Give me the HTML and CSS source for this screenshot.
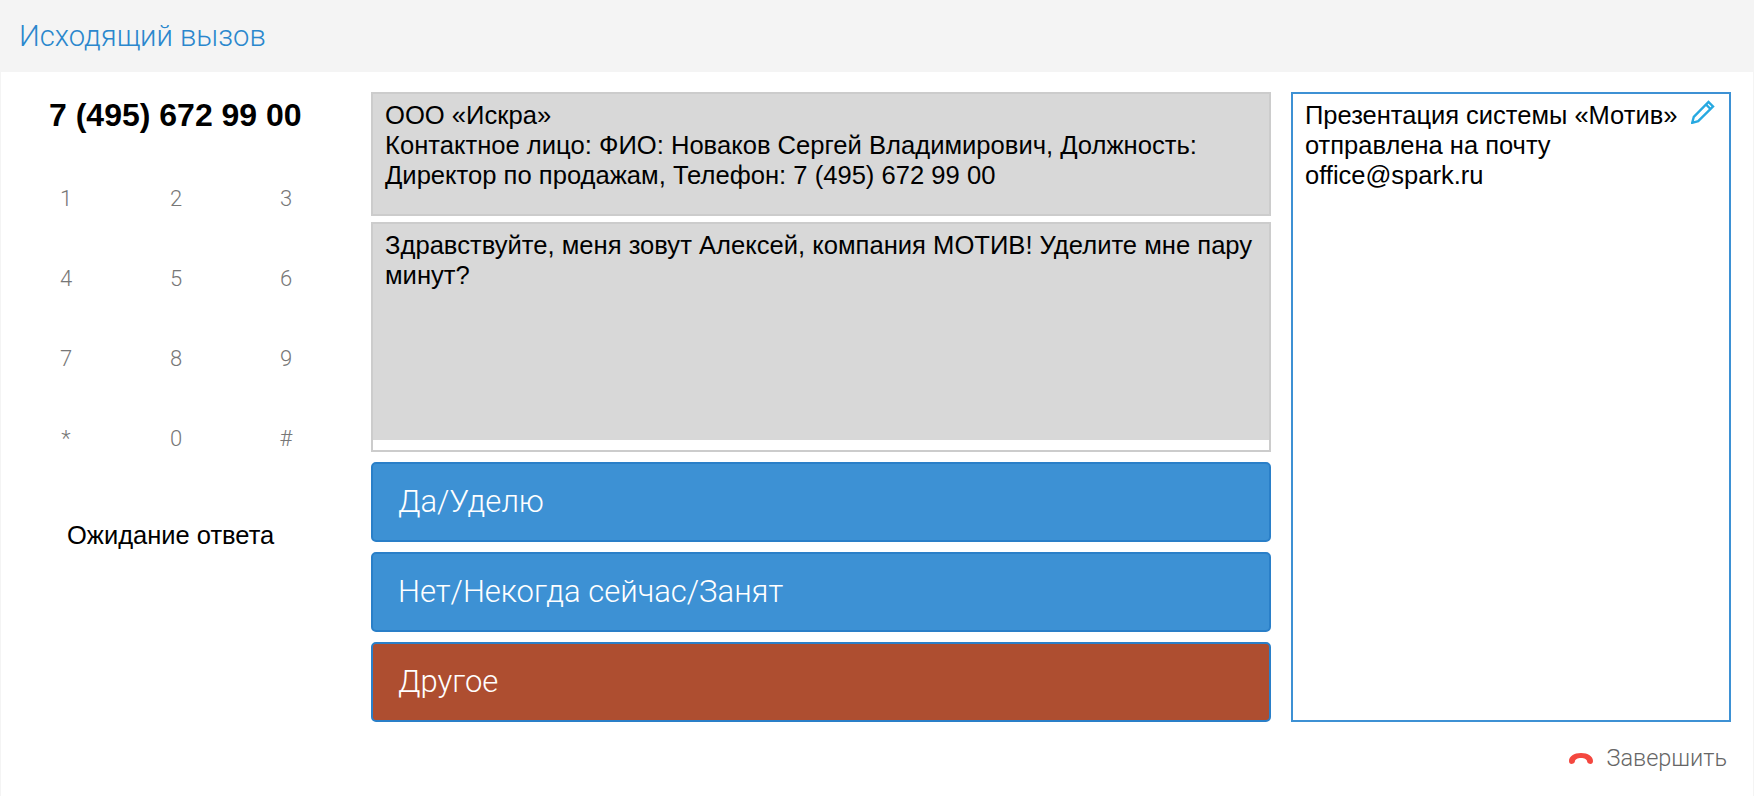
FILE: index.html
```html
<!DOCTYPE html>
<html lang="ru">
<head>
<meta charset="utf-8">
<title>Исходящий вызов</title>
<link rel="stylesheet" href="styles.css">
</head>
<body>
<div class="page">
  <header class="header"><h1 class="title">Исходящий вызов</h1></header>
  <main class="main">
    <section class="dial">
      <div class="number">7 (495) 672 99 00</div>
      <div class="keys">
        <span>1</span><span>2</span><span>3</span>
        <span>4</span><span>5</span><span>6</span>
        <span>7</span><span>8</span><span>9</span>
        <span>*</span><span>0</span><span>#</span>
      </div>
      <div class="status">Ожидание ответа</div>
    </section>
    <section class="center">
      <div class="info">ООО «Искра»<br>Контактное лицо: ФИО: Новаков Сергей Владимирович, Должность: Директор по продажам, Телефон: 7 (495) 672 99 00</div>
      <div class="script"><div class="script-text">Здравствуйте, меня зовут Алексей, компания МОТИВ! Уделите мне пару минут?</div></div>
      <button class="answer">Да/Уделю</button>
      <button class="answer">Нет/Некогда сейчас/Занят</button>
      <button class="answer other">Другое</button>
    </section>
    <aside class="notes">
      <div class="notes-text">Презентация системы «Мотив» отправлена на почту office@spark.ru</div>
      <svg class="pencil" viewBox="0 0 24 24" width="24" height="24" fill="none" stroke="#27a9e1" stroke-width="2.400"><path d="M1.200 22.800 2.800 16.800 17.500 2 22 6.500 7.200 21.200Z"/><path d="M15 4.500 19.500 9"/><path d="M1.200 22.800 3.500 22.200 1.800 20.500Z" fill="#27a9e1" stroke-width="1"/></svg>
    </aside>
  </main>
  <footer class="footer">
    <svg class="hangup" viewBox="0 0 24 11" width="24" height="11"><path d="M0 8C0 3.500 5 0 12 0s12 3.500 12 8c0 1.800-1 3-2.500 3S18 9.800 18 8c0-1.500-2.500-3-6-3S6 6.500 6 8c0 1.800-2 3-3.500 3S0 9.800 0 8Z" fill="#f4473f"/></svg>
    <span class="finish">Завершить</span>
  </footer>
</div>
</body>
</html>
```

FILE: styles.css
```css
* { box-sizing: border-box; }
html, body { margin: 0; padding: 0; background: #fff; }
body { font-family: "Liberation Sans", Arial, sans-serif; color: #000; }
.page { width: 1754px; height: 796px; border-left: 1px solid #f4f4f4; border-right: 1px solid #f4f4f4; overflow: hidden; }
.header { height: 72px; background: #f4f4f4; margin: 0 -1px; padding: 0 0 0 19px; display: flex; align-items: center; }
.title { margin: 0; font-family: Roboto, sans-serif; font-weight: 300; font-size: 29.2px; color: #2a87cd; }
.main { display: flex; padding: 20px 22px 0 0; height: 650px; }
.dial { width: 370px; flex: none; }
.number { font-size: 32px; font-weight: 700; margin-left: 48px; line-height: 36px; margin-top: 5px; white-space: nowrap; }
.keys { display: grid; grid-template-columns: repeat(3, 110px); grid-auto-rows: 80px; margin: 25px 0 0 10px; justify-items: center; align-items: center; font-family: Roboto, sans-serif; font-weight: 300; font-size: 22px; color: #777; }
.status { margin-top: 42px; margin-left: 66px; font-size: 25.5px; line-height: 30px; }
.center { width: 900px; flex: none; display: flex; flex-direction: column; }
.info { height: 124px; background: #d8d8d8; border: 2px solid #ccc; padding: 6px 12px; font-size: 25.6px; line-height: 30px; margin-bottom: 6px; }
.script { height: 230px; border: 2px solid #ccc; background: #fff; margin-bottom: 10px; }
.script-text { height: 216px; background: #d8d8d8; padding: 6px 12px; font-size: 25.6px; line-height: 30px; }
.answer { height: 80px; margin: 0 0 10px; border: 2px solid #2a7fc8; border-radius: 5px; background: #3d91d4; color: #fff; font-family: Roboto, sans-serif; font-weight: 300; font-size: 31px; text-align: left; padding: 0 0 2px 25px; }
.answer.other { background: #ae4e30; margin-bottom: 0; }
.notes { position: relative; width: 440px; margin-left: 20px; flex: none; border: 2px solid #3d91d4; padding: 6px 12px; font-size: 25.5px; line-height: 30px; height: 630px; }
.notes-text { width: 380px; }
.pencil { position: absolute; top: 6px; right: 14px; }
.footer { display: flex; justify-content: flex-end; align-items: center; padding: 0 26px 2px 0; height: 74px; gap: 13px; }
.finish { font-family: Roboto, sans-serif; font-weight: 300; font-size: 23.5px; color: #666; }
```
